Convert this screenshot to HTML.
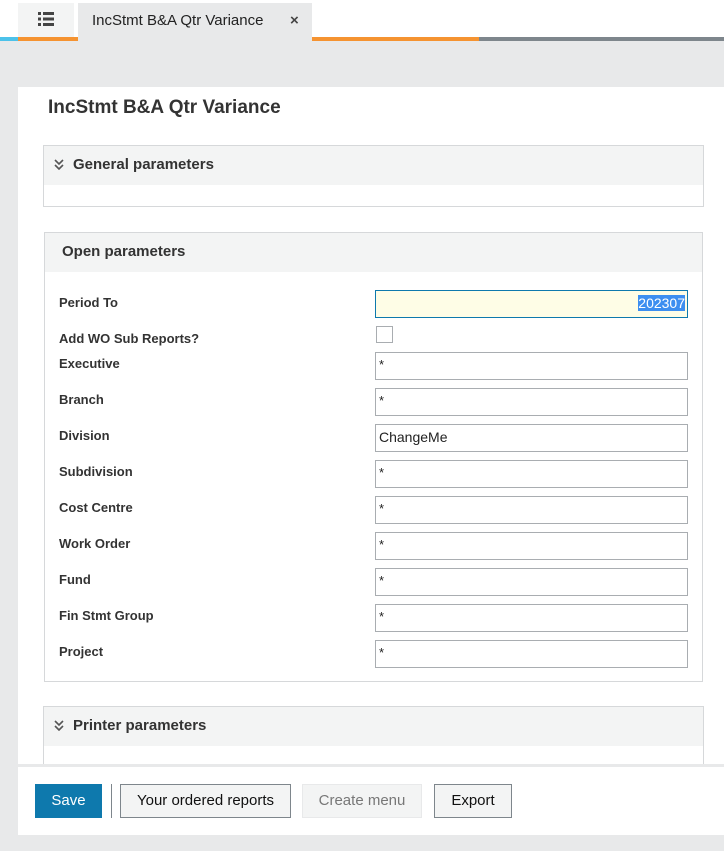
<!DOCTYPE html>
<html><head><style>
*{box-sizing:border-box;margin:0;padding:0}
body{width:724px;height:851px;background:#e8e9ea;font-family:"Liberation Sans",sans-serif;position:relative;overflow:hidden;color:#333}
.abs{position:absolute}
.tabbar{left:0;top:0;width:724px;height:37px;background:#fff}
.lbl{position:absolute;left:59px;font-size:13px;font-weight:bold;color:#333}
.inp{position:absolute;left:375px;width:313px;height:28px;border:1px solid #a9adb1;background:#fff;font-size:13px;padding:4px 3px;color:#222}
.box{position:absolute;border:1px solid #d6d8da;background:#fff}
.hdr{background:#f3f4f4;height:39px;font-size:15px;font-weight:bold;color:#333;line-height:38px}
.btn{position:absolute;top:784px;height:34px;font-size:15px;line-height:32px;text-align:center;border:1px solid #7e868c;background:#f3f4f4;color:#111}
</style></head><body>
<div class="abs tabbar"></div>
<div class="abs" style="left:18px;top:3px;width:56px;height:34px;background:#f3f4f4"></div>
<svg class="abs" style="left:38px;top:12px" width="16" height="14"><g fill="#444"><rect x="0" y="0" width="3" height="3"/><rect x="5" y="0" width="11" height="3"/><rect x="0" y="5.5" width="3" height="3"/><rect x="5" y="5.5" width="11" height="3"/><rect x="0" y="11" width="3" height="3"/><rect x="5" y="11" width="11" height="3"/></g></svg>
<div class="abs" style="left:78px;top:3px;width:234px;height:38px;background:#e8e9ea"></div>
<div class="abs" style="left:92px;top:12px;font-size:15px;color:#222">IncStmt B&amp;A Qtr Variance</div>
<div class="abs" style="left:290px;top:12px;font-size:15px;color:#444;font-weight:bold">×</div>
<div class="abs" style="left:0;top:37px;width:18px;height:4px;background:#4cc2ea"></div>
<div class="abs" style="left:18px;top:37px;width:60px;height:4px;background:#f59331"></div>
<div class="abs" style="left:312px;top:37px;width:167px;height:4px;background:#f59331"></div>
<div class="abs" style="left:479px;top:37px;width:245px;height:4px;background:#7e868c"></div>

<div class="abs" style="left:18px;top:87px;width:706px;height:677px;background:#fff"></div>
<div class="abs" style="left:48px;top:97px;font-size:19px;font-weight:bold;color:#333">IncStmt B&amp;A Qtr Variance</div>

<div class="box" style="left:43px;top:145px;width:661px;height:62px"><div class="hdr" style="padding-left:29px">General parameters</div></div>
<svg class="abs" style="left:54px;top:159px" width="10" height="11"><path d="M1 1l4 4 4-4M1 6l4 4 4-4" stroke="#555" stroke-width="1.6" fill="none"/></svg>

<div class="box" style="left:44px;top:232px;width:659px;height:450px"><div class="hdr" style="padding-left:17px">Open parameters</div></div>

<div class="lbl" style="top:295px">Period To</div>
<div class="inp" style="top:290px;background:#fefde6;border-color:#0e79ad;text-align:right;padding-right:2px;font-size:14px"><span style="background:#3d8ef0;color:#fff">202307</span></div>
<div class="lbl" style="top:331px">Add WO Sub Reports?</div>
<div class="abs" style="left:376px;top:326px;width:17px;height:17px;border:1px solid #a9adb1"></div>
<div class="lbl" style="top:356px">Executive</div><div class="inp" style="top:352px">*</div>
<div class="lbl" style="top:392px">Branch</div><div class="inp" style="top:388px">*</div>
<div class="lbl" style="top:428px">Division</div><div class="inp" style="top:424px;font-size:14px">ChangeMe</div>
<div class="lbl" style="top:464px">Subdivision</div><div class="inp" style="top:460px">*</div>
<div class="lbl" style="top:500px">Cost Centre</div><div class="inp" style="top:496px">*</div>
<div class="lbl" style="top:536px">Work Order</div><div class="inp" style="top:532px">*</div>
<div class="lbl" style="top:572px">Fund</div><div class="inp" style="top:568px">*</div>
<div class="lbl" style="top:608px">Fin Stmt Group</div><div class="inp" style="top:604px">*</div>
<div class="lbl" style="top:644px">Project</div><div class="inp" style="top:640px">*</div>

<div class="box" style="left:43px;top:706px;width:661px;height:70px"><div class="hdr" style="padding-left:29px">Printer parameters</div></div>
<svg class="abs" style="left:54px;top:720px" width="10" height="11"><path d="M1 1l4 4 4-4M1 6l4 4 4-4" stroke="#555" stroke-width="1.6" fill="none"/></svg>

<div class="abs" style="left:18px;top:764px;width:706px;height:3px;background:#e8e9ea"></div>
<div class="abs" style="left:18px;top:767px;width:706px;height:68px;background:#fff"></div>
<div class="btn" style="left:35px;width:67px;background:#0e79ad;border-color:#0e79ad;color:#fff">Save</div>
<div class="abs" style="left:111px;top:784px;width:1px;height:34px;background:#7e868c"></div>
<div class="btn" style="left:120px;width:171px">Your ordered reports</div>
<div class="btn" style="left:302px;width:120px;border-color:#e8e9ea;color:#777">Create menu</div>
<div class="btn" style="left:434px;width:78px">Export</div>
</body></html>
